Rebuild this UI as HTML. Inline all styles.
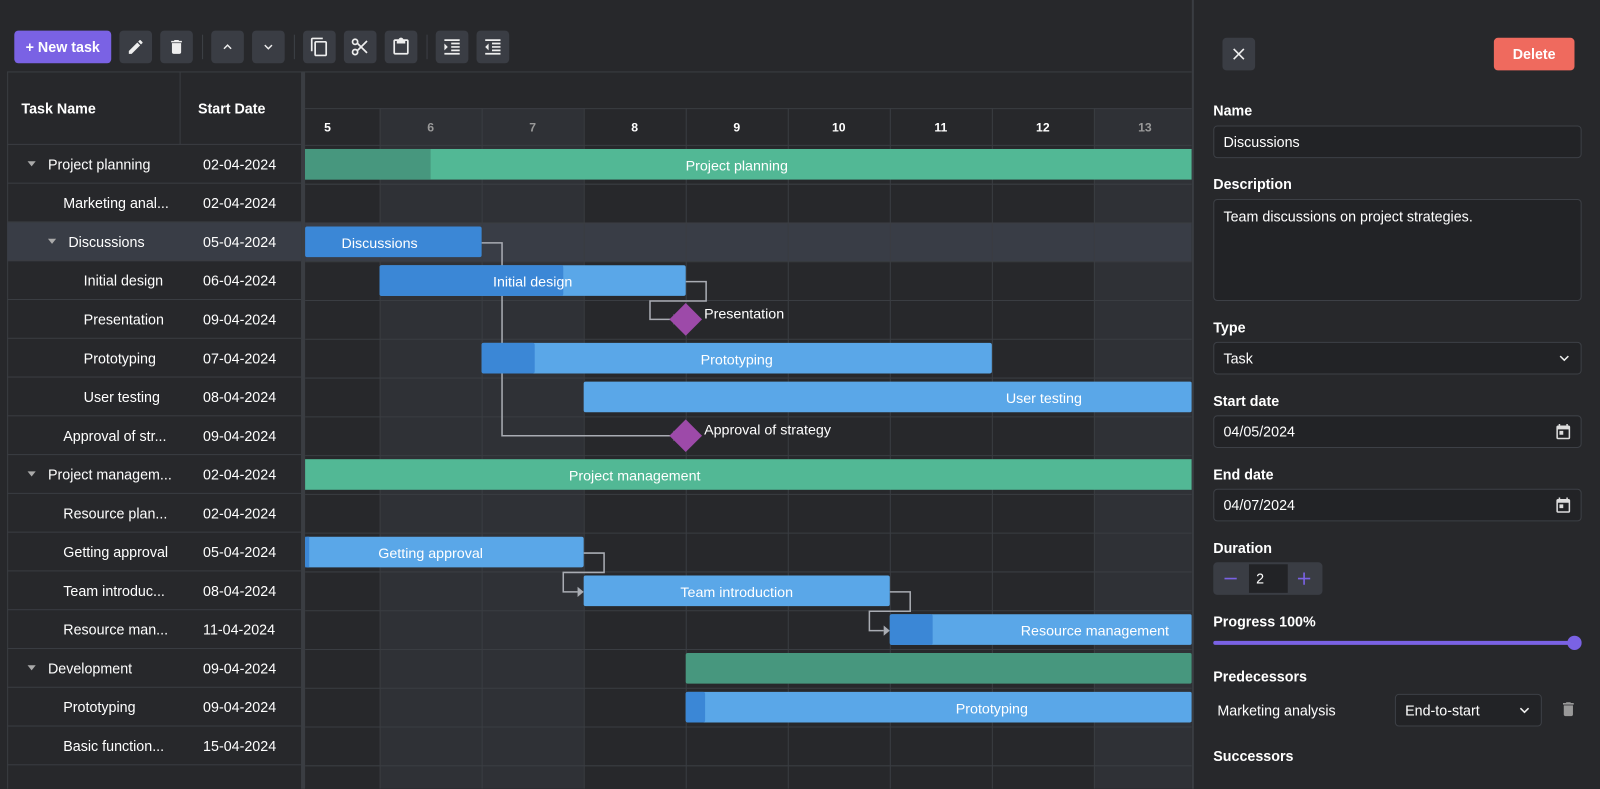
<!DOCTYPE html>
<html><head><meta charset="utf-8"><style>
*{box-sizing:border-box;margin:0;padding:0}
body{width:1600px;height:773px;background:#27282b;font-family:"Liberation Sans",sans-serif;color:#fff;position:relative;overflow:hidden;font-size:14px}
#w{position:absolute;left:0;top:0;width:1568px;height:758px;transform:scale(1.020408);transform-origin:0 0}
.tb{position:absolute;top:30px;height:32px;border-radius:4px;background:#3a3d44;display:flex;align-items:center;justify-content:center}
.sep{position:absolute;top:34px;width:1px;height:24px;background:#3d4046}
.grid{position:absolute;left:7px;top:70px;width:1161px;height:703px;border-top:1px solid #3a3d42;border-left:1px solid #3a3d42}
.row{position:absolute;left:7px;width:288px;height:38px;border-bottom:1px solid #3a3d42;display:flex;align-items:center;font-size:14px}
.row .n{width:169px;overflow:hidden;white-space:nowrap}
.row .d{position:absolute;left:192px}
.tri{display:inline-block;width:0;height:0;border-left:4px solid transparent;border-right:4px solid transparent;border-top:5px solid #aaa;margin-right:12px;vertical-align:middle}
.lbl{position:absolute;font-weight:bold;font-size:14px}
.inp{position:absolute;left:1189px;width:361px;height:32px;border:1px solid #3d4046;border-radius:4px;padding:0 9px;display:flex;align-items:center;font-size:14px;background:#222326}
</style></head><body><div id="w">
<div class="tb" style="left:14px;width:95px;background:#7a62e4;font-weight:bold;font-size:14px">+ New task</div>
<div class="tb" style="left:117px;width:32px"><svg width="18" height="18" viewBox="0 0 24 24"><path d="M3 17.3V21h3.7L17.8 9.9l-3.7-3.7zM20.7 7c.4-.4.4-1 0-1.4l-2.3-2.3c-.4-.4-1-.4-1.4 0l-1.8 1.8 3.7 3.7z" fill="#eee"/></svg></div>
<div class="tb" style="left:157px;width:32px"><svg width="18" height="18" viewBox="0 0 24 24"><path d="M6 19c0 1.1.9 2 2 2h8c1.1 0 2-.9 2-2V7H6zM19 4h-3.5l-1-1h-5l-1 1H5v2h14z" fill="#eee"/></svg></div>
<div class="sep" style="left:198px"></div>
<div class="tb" style="left:207px;width:32px"><svg width="14" height="14" viewBox="0 0 24 24"><path d="M6 15l6-6 6 6" stroke="#eee" stroke-width="2.5" fill="none"/></svg></div>
<div class="tb" style="left:247px;width:32px"><svg width="14" height="14" viewBox="0 0 24 24"><path d="M6 9l6 6 6-6" stroke="#eee" stroke-width="2.5" fill="none"/></svg></div>
<div class="sep" style="left:288px"></div>
<div class="tb" style="left:297px;width:32px"><svg width="20" height="20" viewBox="0 0 24 24"><path d="M16 1H4c-1.1 0-2 .9-2 2v14h2V3h12zm3 4H8c-1.1 0-2 .9-2 2v14c0 1.1.9 2 2 2h11c1.1 0 2-.9 2-2V7c0-1.1-.9-2-2-2zm0 16H8V7h11z" fill="#eee"/></svg></div>
<div class="tb" style="left:337px;width:32px"><svg width="20" height="20" viewBox="0 0 24 24"><circle cx="6" cy="6" r="3" stroke="#eee" stroke-width="2" fill="none"/><circle cx="6" cy="18" r="3" stroke="#eee" stroke-width="2" fill="none"/><path d="M8.5 7.5L20 19M8.5 16.5L20 5" stroke="#eee" stroke-width="2"/></svg></div>
<div class="tb" style="left:377px;width:32px"><svg width="20" height="20" viewBox="0 0 24 24"><path d="M19 3h-4.2C14.4 1.8 13.3 1 12 1s-2.4.8-2.8 2H5c-1.1 0-2 .9-2 2v14c0 1.1.9 2 2 2h14c1.1 0 2-.9 2-2V5c0-1.1-.9-2-2-2zm0 16H5V5h2v3h10V5h2z" fill="#eee"/></svg></div>
<div class="sep" style="left:418px"></div>
<div class="tb" style="left:427px;width:32px"><svg width="20" height="20" viewBox="0 0 24 24"><path d="M3 21h18v-2H3zM3 8v8l4-4zm8 9h10v-2H11zM3 3v2h18V3zm8 6h10V7H11zm0 4h10v-2H11z" fill="#eee"/></svg></div>
<div class="tb" style="left:467px;width:32px"><svg width="20" height="20" viewBox="0 0 24 24"><path d="M11 17h10v-2H11zm-8-5l4 4V8zm0 9h18v-2H3zM3 3v2h18V3zm8 6h10V7H11zm0 4h10v-2H11z" fill="#eee"/></svg></div>

<div class="grid"></div>
<div style="position:absolute;left:7px;top:70px;width:288px;height:72px;border-bottom:1px solid #3a3d42"></div>
<div style="position:absolute;left:176px;top:70px;width:1px;height:72px;background:#3a3d42"></div>
<div class="lbl" style="left:21px;top:98px">Task Name</div>
<div class="lbl" style="left:194px;top:98px">Start Date</div>
<div style="position:absolute;left:295px;top:70px;width:4px;height:703px;background:#3a3d42"></div>
<div style="position:absolute;left:7px;top:218px;width:288px;height:38px;background:#393d46"></div>

<div class="row" style="top:142px;padding-left:20px"><span class="tri"></span><span class="n">Project planning</span><span class="d">02-04-2024</span></div>
<div class="row" style="top:180px;padding-left:55px"><span class="n" style="width:115px">Marketing anal...</span><span class="d">02-04-2024</span></div>
<div class="row" style="top:218px;padding-left:40px"><span class="tri"></span><span class="n">Discussions</span><span class="d">05-04-2024</span></div>
<div class="row" style="top:256px;padding-left:75px"><span class="n">Initial design</span><span class="d">06-04-2024</span></div>
<div class="row" style="top:294px;padding-left:75px"><span class="n">Presentation</span><span class="d">09-04-2024</span></div>
<div class="row" style="top:332px;padding-left:75px"><span class="n">Prototyping</span><span class="d">07-04-2024</span></div>
<div class="row" style="top:370px;padding-left:75px"><span class="n">User testing</span><span class="d">08-04-2024</span></div>
<div class="row" style="top:408px;padding-left:55px"><span class="n">Approval of str...</span><span class="d">09-04-2024</span></div>
<div class="row" style="top:446px;padding-left:20px"><span class="tri"></span><span class="n" style="width:130px">Project managem...</span><span class="d">02-04-2024</span></div>
<div class="row" style="top:484px;padding-left:55px"><span class="n">Resource plan...</span><span class="d">02-04-2024</span></div>
<div class="row" style="top:522px;padding-left:55px"><span class="n">Getting approval</span><span class="d">05-04-2024</span></div>
<div class="row" style="top:560px;padding-left:55px"><span class="n">Team introduc...</span><span class="d">08-04-2024</span></div>
<div class="row" style="top:598px;padding-left:55px"><span class="n">Resource man...</span><span class="d">11-04-2024</span></div>
<div class="row" style="top:636px;padding-left:20px"><span class="tri"></span><span class="n">Development</span><span class="d">09-04-2024</span></div>
<div class="row" style="top:674px;padding-left:55px"><span class="n">Prototyping</span><span class="d">09-04-2024</span></div>
<div class="row" style="top:712px;padding-left:55px"><span class="n">Basic function...</span><span class="d">15-04-2024</span></div>

<svg style="position:absolute;left:0;top:0" width="1168" height="773" font-family="Liberation Sans, sans-serif" font-size="14">
<rect x="372" y="106" width="200" height="667" fill="#2f3136"/>
<rect x="1072" y="106" width="96" height="667" fill="#2f3136"/>
<rect x="299" y="218" width="869" height="38" fill="#393d46"/>
<g stroke="#3a3d42" stroke-width="1">
<line x1="299" y1="106.5" x2="1168" y2="106.5"/><line x1="299" y1="142.5" x2="1168" y2="142.5"/>
<line x1="372.5" y1="106" x2="372.5" y2="773"/><line x1="472.5" y1="106" x2="472.5" y2="773"/><line x1="572.5" y1="106" x2="572.5" y2="773"/><line x1="672.5" y1="106" x2="672.5" y2="773"/><line x1="772.5" y1="106" x2="772.5" y2="773"/><line x1="872.5" y1="106" x2="872.5" y2="773"/><line x1="972.5" y1="106" x2="972.5" y2="773"/><line x1="1072.5" y1="106" x2="1072.5" y2="773"/>
<line x1="299" y1="180.5" x2="1168" y2="180.5"/><line x1="299" y1="218.5" x2="1168" y2="218.5"/><line x1="299" y1="256.5" x2="1168" y2="256.5"/><line x1="299" y1="294.5" x2="1168" y2="294.5"/><line x1="299" y1="332.5" x2="1168" y2="332.5"/><line x1="299" y1="370.5" x2="1168" y2="370.5"/><line x1="299" y1="408.5" x2="1168" y2="408.5"/><line x1="299" y1="446.5" x2="1168" y2="446.5"/><line x1="299" y1="484.5" x2="1168" y2="484.5"/><line x1="299" y1="522.5" x2="1168" y2="522.5"/><line x1="299" y1="560.5" x2="1168" y2="560.5"/><line x1="299" y1="598.5" x2="1168" y2="598.5"/><line x1="299" y1="636.5" x2="1168" y2="636.5"/><line x1="299" y1="674.5" x2="1168" y2="674.5"/><line x1="299" y1="712.5" x2="1168" y2="712.5"/><line x1="299" y1="750.5" x2="1168" y2="750.5"/>
</g>
<g font-size="12" font-weight="bold" text-anchor="middle">
<text x="321" y="129" fill="#fff">5</text><text x="422" y="129" fill="#999">6</text><text x="522" y="129" fill="#999">7</text><text x="622" y="129" fill="#fff">8</text><text x="722" y="129" fill="#fff">9</text><text x="822" y="129" fill="#fff">10</text><text x="922" y="129" fill="#fff">11</text><text x="1022" y="129" fill="#fff">12</text><text x="1122" y="129" fill="#999">13</text>
</g>
<g stroke="#a9acb3" stroke-width="1.5" fill="none">
<path d="M472 238H492V427H658"/>
<path d="M672 276H692V295H637V313H658"/>
<path d="M572 542H592V561H552V580H566"/>
<path d="M872 580H892V599H852V618H866"/>
</g>
<g fill="#a9acb3"><path d="M660 422l6 5-6 5z"/><path d="M660 308l6 5-6 5z"/><path d="M566 575l6 5-6 5z"/><path d="M866 613l6 5-6 5z"/></g>
<rect x="299" y="146" width="869" height="30" fill="#52b895"/><rect x="299" y="146" width="123" height="30" fill="#47977e"/>
<rect x="299" y="222" width="173" height="30" rx="2" fill="#3b87d6"/>
<rect x="372" y="260" width="300" height="30" rx="2" fill="#5aa7e8"/><rect x="372" y="260" width="180" height="30" rx="2" fill="#3b87d6"/>
<rect x="472" y="336" width="500" height="30" rx="2" fill="#5aa7e8"/><rect x="472" y="336" width="52" height="30" rx="2" fill="#3b87d6"/>
<rect x="572" y="374" width="596" height="30" rx="2" fill="#5aa7e8"/>
<rect x="299" y="450" width="869" height="30" fill="#52b895"/>
<rect x="299" y="526" width="273" height="30" rx="2" fill="#5aa7e8"/><rect x="299" y="526" width="4" height="30" fill="#3b87d6"/>
<rect x="572" y="564" width="300" height="30" rx="2" fill="#5aa7e8"/>
<rect x="872" y="602" width="296" height="30" rx="2" fill="#5aa7e8"/><rect x="872" y="602" width="42" height="30" rx="2" fill="#3b87d6"/>
<rect x="672" y="640" width="496" height="30" rx="2" fill="#47977e"/>
<rect x="672" y="678" width="496" height="30" rx="2" fill="#5aa7e8"/><rect x="672" y="678" width="19" height="30" rx="2" fill="#3b87d6"/>
<path d="M672 297l16 16-16 16-16-16z" fill="#9d4aa9"/>
<path d="M672 411l16 16-16 16-16-16z" fill="#9d4aa9"/>
<g fill="#fff" text-anchor="middle">
<text x="722" y="167">Project planning</text><text x="372" y="243">Discussions</text><text x="522" y="281">Initial design</text><text x="722" y="357">Prototyping</text><text x="1023" y="395">User testing</text><text x="622" y="471">Project management</text><text x="422" y="547">Getting approval</text><text x="722" y="585">Team introduction</text><text x="1073" y="623">Resource management</text><text x="972" y="699">Prototyping</text>
</g>
<text x="690" y="312" fill="#fff">Presentation</text><text x="690" y="426" fill="#fff">Approval of strategy</text>
</svg>

<div style="position:absolute;left:1168px;top:0;width:432px;height:773px;background:#27282b;border-left:2px solid #3a3d42"></div>
<div class="tb" style="left:1198px;top:37px;width:32px;background:#3a3d44"><svg width="14" height="14" viewBox="0 0 14 14"><path d="M2 2l10 10M12 2L2 12" stroke="#eee" stroke-width="1.6"/></svg></div>
<div class="tb" style="left:1464px;top:37px;width:79px;background:#ef6a5e;font-weight:bold">Delete</div>
<div class="lbl" style="left:1189px;top:100px">Name</div>
<div class="inp" style="top:123px">Discussions</div>
<div class="lbl" style="left:1189px;top:172px">Description</div>
<div class="inp" style="top:195px;height:100px;align-items:flex-start;padding-top:8px">Team discussions on project strategies.</div>
<div class="lbl" style="left:1189px;top:313px">Type</div>
<div class="inp" style="top:335px">Task<svg style="position:absolute;right:10px" width="12" height="12" viewBox="0 0 12 12"><path d="M2 4l4 4 4-4" stroke="#eee" stroke-width="1.5" fill="none"/></svg></div>
<div class="lbl" style="left:1189px;top:385px">Start date</div>
<div class="inp" style="top:407px">04/05/2024<svg style="position:absolute;right:8px" width="18" height="18" viewBox="0 0 24 24"><path d="M19 4h-1V2h-2v2H8V2H6v2H5c-1.1 0-2 .9-2 2v14c0 1.1.9 2 2 2h14c1.1 0 2-.9 2-2V6c0-1.1-.9-2-2-2zm0 16H5V9h14zM7 11h5v5H7z" fill="#ddd"/></svg></div>
<div class="lbl" style="left:1189px;top:457px">End date</div>
<div class="inp" style="top:479px">04/07/2024<svg style="position:absolute;right:8px" width="18" height="18" viewBox="0 0 24 24"><path d="M19 4h-1V2h-2v2H8V2H6v2H5c-1.1 0-2 .9-2 2v14c0 1.1.9 2 2 2h14c1.1 0 2-.9 2-2V6c0-1.1-.9-2-2-2zm0 16H5V9h14zM7 11h5v5H7z" fill="#ddd"/></svg></div>
<div class="lbl" style="left:1189px;top:529px">Duration</div>
<div style="position:absolute;left:1189px;top:551px;width:107px;height:32px;background:#3a3d44;border-radius:4px"></div>
<div style="position:absolute;left:1224px;top:553px;width:38px;height:28px;background:#222326;padding:6px 0 0 7px">2</div>
<svg style="position:absolute;left:1199px;top:560px" width="14" height="14" viewBox="0 0 14 14"><path d="M1 7h12" stroke="#7a62e4" stroke-width="1.6"/></svg>
<svg style="position:absolute;left:1271px;top:560px" width="14" height="14" viewBox="0 0 14 14"><path d="M1 7h12M7 1v12" stroke="#7a62e4" stroke-width="1.6"/></svg>
<div class="lbl" style="left:1189px;top:601px">Progress 100%</div>
<div style="position:absolute;left:1189px;top:628px;width:354px;height:4px;background:#7a62e4;border-radius:2px"></div>
<div style="position:absolute;left:1536px;top:623px;width:14px;height:14px;background:#7a62e4;border-radius:50%"></div>
<div class="lbl" style="left:1189px;top:655px">Predecessors</div>
<div style="position:absolute;left:1193px;top:688px">Marketing analysis</div>
<div class="inp" style="left:1367px;top:680px;width:144px">End-to-start<svg style="position:absolute;right:10px" width="12" height="12" viewBox="0 0 12 12"><path d="M2 4l4 4 4-4" stroke="#eee" stroke-width="1.5" fill="none"/></svg></div>
<svg style="position:absolute;left:1528px;top:686px" width="18" height="18" viewBox="0 0 24 24"><path d="M6 19c0 1.1.9 2 2 2h8c1.1 0 2-.9 2-2V7H6zM19 4h-3.5l-1-1h-5l-1 1H5v2h14z" fill="#999"/></svg>
<div class="lbl" style="left:1189px;top:733px">Successors</div>
</div></body></html>
